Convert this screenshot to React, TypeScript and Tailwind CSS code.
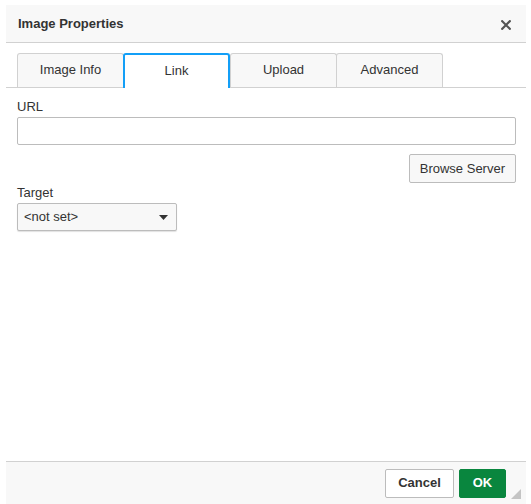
import * as React from 'react';

const tabs = ['Image Info', 'Link', 'Upload', 'Advanced'];

export default function App() {
    const [active, setActive] = React.useState('Link');

    return (
        <div
            className="w-[531px] h-[504px] bg-white pt-[5px] pl-[6px] pr-[5px] text-[13px] text-[#333]"
            style={{ fontFamily: '"Liberation Sans", Arial, sans-serif' }}
        >
            <div className="flex flex-col h-[499px] bg-white">
                {/* header */}
                <div className="flex items-center justify-between h-[38px] bg-[#f8f8f8] border-b border-[#d1d1d1] pl-[12px] pr-[15px]">
                    <span className="font-bold text-[13px] text-[#333]">Image Properties</span>
                    <svg width="10" height="10" viewBox="0 0 10 10" className="mt-[2px]">
                        <path d="M1.2 1.2 L8.8 8.8 M8.8 1.2 L1.2 8.8" stroke="#555" strokeWidth="2.2" strokeLinecap="square" />
                    </svg>
                </div>

                {/* tabs */}
                <div className="flex items-end h-[45px] pl-[11px] border-b border-[#d1d1d1]">
                    {tabs.map((t) => (
                        <button
                            key={t}
                            onClick={() => setActive(t)}
                            className={
                                t === active
                                    ? 'w-[107px] h-[35px] -mb-px pb-[2px] bg-white border-2 border-b-0 border-[#139ff7] rounded-t-[3px] text-[#333] text-[13px]'
                                    : 'w-[107px] h-[34px] mr-[-1px] pb-[2px] bg-[#f8f8f8] border border-b-0 border-[#d1d1d1] rounded-t-[3px] text-[#333] text-[13px]'
                            }
                        >
                            {t}
                        </button>
                    ))}
                </div>

                {/* body */}
                <div className="flex-1 pl-[11px] pr-[10px] pt-[11px]">
                    <div className="text-[13px] leading-[16px] mb-[2px]">URL</div>
                    <div className="h-[28px] border border-[#bcbcbc] rounded-[2px] bg-white" />
                    <div className="flex justify-end mt-[9px]">
                        <button className="h-[29px] px-[10px] border border-[#bcbcbc] rounded-[2px] bg-[#f8f8f8] text-[13px] text-[#333]">
                            Browse Server
                        </button>
                    </div>
                    <div className="text-[13px] leading-[16px] mt-[2px] mb-[2px]">Target</div>
                    <div className="flex items-center justify-between w-[160px] h-[28px] border border-[#bcbcbc] rounded-[2px] bg-[#f8f8f8] pl-[6px] pr-[8px] shadow-[0_1px_1px_rgba(0,0,0,0.12)]">
                        <span>&lt;not set&gt;</span>
                        <svg width="9" height="5" viewBox="0 0 9 5">
                            <path d="M0 0 H9 L4.5 5 Z" fill="#333" />
                        </svg>
                    </div>
                </div>

                {/* footer */}
                <div className="relative flex items-center justify-end gap-[5px] h-[43px] bg-[#f8f8f8] border-t border-[#d1d1d1] pr-[20px]">
                    <button className="h-[29px] w-[69px] border border-[#bcbcbc] rounded-[2px] bg-white font-bold text-[13px] text-[#333]">
                        Cancel
                    </button>
                    <button className="h-[29px] w-[47px] border border-[#09863e] rounded-[2px] bg-[#09863e] font-bold text-[13px] text-white">
                        OK
                    </button>
                    <svg width="10" height="10" viewBox="0 0 10 10" className="absolute right-[5px] bottom-[5px]">
                        <path d="M10 0 V10 H0 Z" fill="#c4c4c4" />
                    </svg>
                </div>
            </div>
        </div>
    );
}
